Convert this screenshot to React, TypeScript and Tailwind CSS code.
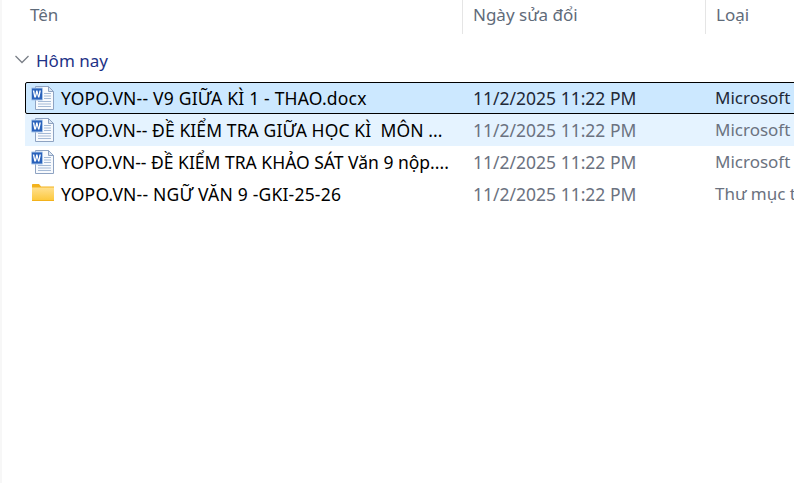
const rows = [
  { name: 'YOPO.VN-- V9 GIỮA KÌ 1 - THAO.docx', type: 'Microsoft Word Document', kind: 'word', state: 'selected', track: 'tracking-[0.2px]' },
  { name: 'YOPO.VN-- ĐỀ KIỂM TRA GIỮA HỌC KÌ  MÔN ...', type: 'Microsoft Word Document', kind: 'word', state: 'hover', track: 'tracking-[0.1px]' },
  { name: 'YOPO.VN-- ĐỀ KIỂM TRA KHẢO SÁT Văn 9 nộp....', type: 'Microsoft Word Document', kind: 'word', state: '', track: 'tracking-normal' },
  { name: 'YOPO.VN-- NGỮ VĂN 9 -GKI-25-26', type: 'Thư mục tệp', kind: 'folder', state: '', track: 'tracking-[0.2px]' },
];

function WordIcon() {
  return (
    <svg width="24" height="24" viewBox="0 0 24 24" className="shrink-0">
      <path d="M5.500.5H18.500l5 5v18H5.500z" fill="#f8fafd" stroke="#8ea3c2" />
      <path d="M18.500.5v5h5z" fill="#dbe5f2" stroke="#8ea3c2" />
      <path d="M14 7.500h7M14 10h7M14 12.500h7M8 15.500h13M8 18h13M8 20.500h13" stroke="#a5bad6" strokeWidth="1" />
      <rect x="1" y="1.500" width="12" height="13" rx="1" fill="#a9c6ea" />
      <rect x="2" y="2.500" width="10" height="11" fill="#2a62bb" />
      <path d="M2.800 4.500h1.500l.8 5 1.100-5h1.300l1.100 5 .8-5h1.500l-1.500 7H8.100L7 7.400 5.900 11.500H4.300z" fill="#fff" />
    </svg>
  );
}

function FolderIcon() {
  return (
    <svg width="24" height="24" viewBox="0 0 24 24" className="shrink-0">
      <defs>
        <linearGradient id="folderBody" x1="0" y1="0" x2="0" y2="1">
          <stop offset="0" stopColor="#ffe08f" />
          <stop offset="1" stopColor="#fcc93f" />
        </linearGradient>
      </defs>
      <path d="M2 3c0-.6.400-1 1-1h6l2 2.500v2H2z" fill="#f3b21c" />
      <path d="M2 4.500h22v14.500H2z" fill="#f3b21c" />
      <path d="M2 5.500h22v12.500H2z" fill="url(#folderBody)" />
    </svg>
  );
}

export default function App() {
  return (
    <div className="h-[483px] w-[794px] overflow-hidden bg-white font-['Noto_Sans',sans-serif] text-[17px]">
      <div className="h-full border-l-2 border-[#f7f7f7]">
        {/* column headers */}
        <div className="flex h-[34px] text-[#5f6b7a]">
          <div className="w-[460px] pl-[28px] pt-[2px]">Tên</div>
          <div className="w-[243px] border-l border-[#e5e5e5] pl-[10px] pt-[2px]">Ngày sửa đổi</div>
          <div className="flex-1 border-l border-[#e5e5e5] pl-[10px] pt-[2px]">Loại</div>
        </div>

        <div className="flex h-[48px] items-center pt-[6px] pl-[13px] text-[#1e3287]">
          <svg width="14" height="14" viewBox="0 0 14 14" className="shrink-0">
            <path d="M.5 2l6.500 6.500L13.500 2" fill="none" stroke="#7a7f87" strokeWidth="1.250" />
          </svg>
          <span className="ml-[7px]">Hôm nay</span>
        </div>

        {/* rows run past the right edge, the window cuts them off */}
        {rows.map((r) => (
          <div
            key={r.name}
            className={`ml-[23px] flex h-[32px] w-[800px] items-center whitespace-pre ${
              r.state === 'selected'
                ? 'rounded-[2px] border border-black bg-[#cce8ff]'
                : r.state === 'hover'
                  ? 'bg-[#e5f3ff]'
                  : ''
            }`}
          >
            <div className={`flex shrink-0 items-center gap-[7px] text-black ${r.state === 'selected' ? 'w-[436px] pl-[4px]' : 'w-[437px] pl-[5px]'}`}>
              {r.kind === 'word' ? <WordIcon /> : <FolderIcon />}
              <span className={`text-[17.5px] ${r.track}`}>{r.name}</span>
            </div>
            <div className={`w-[243px] shrink-0 pl-[11px] text-[17.5px] ${r.state === 'selected' ? 'text-[#1f2937]' : 'text-[#6b7280]'}`}>
              11/2/2025 11:22 PM
            </div>
            <div className={`pl-[10px] ${r.state === 'selected' ? 'text-[#1f2937]' : 'text-[#6b7280]'}`}>{r.type}</div>
          </div>
        ))}
      </div>
    </div>
  );
}
